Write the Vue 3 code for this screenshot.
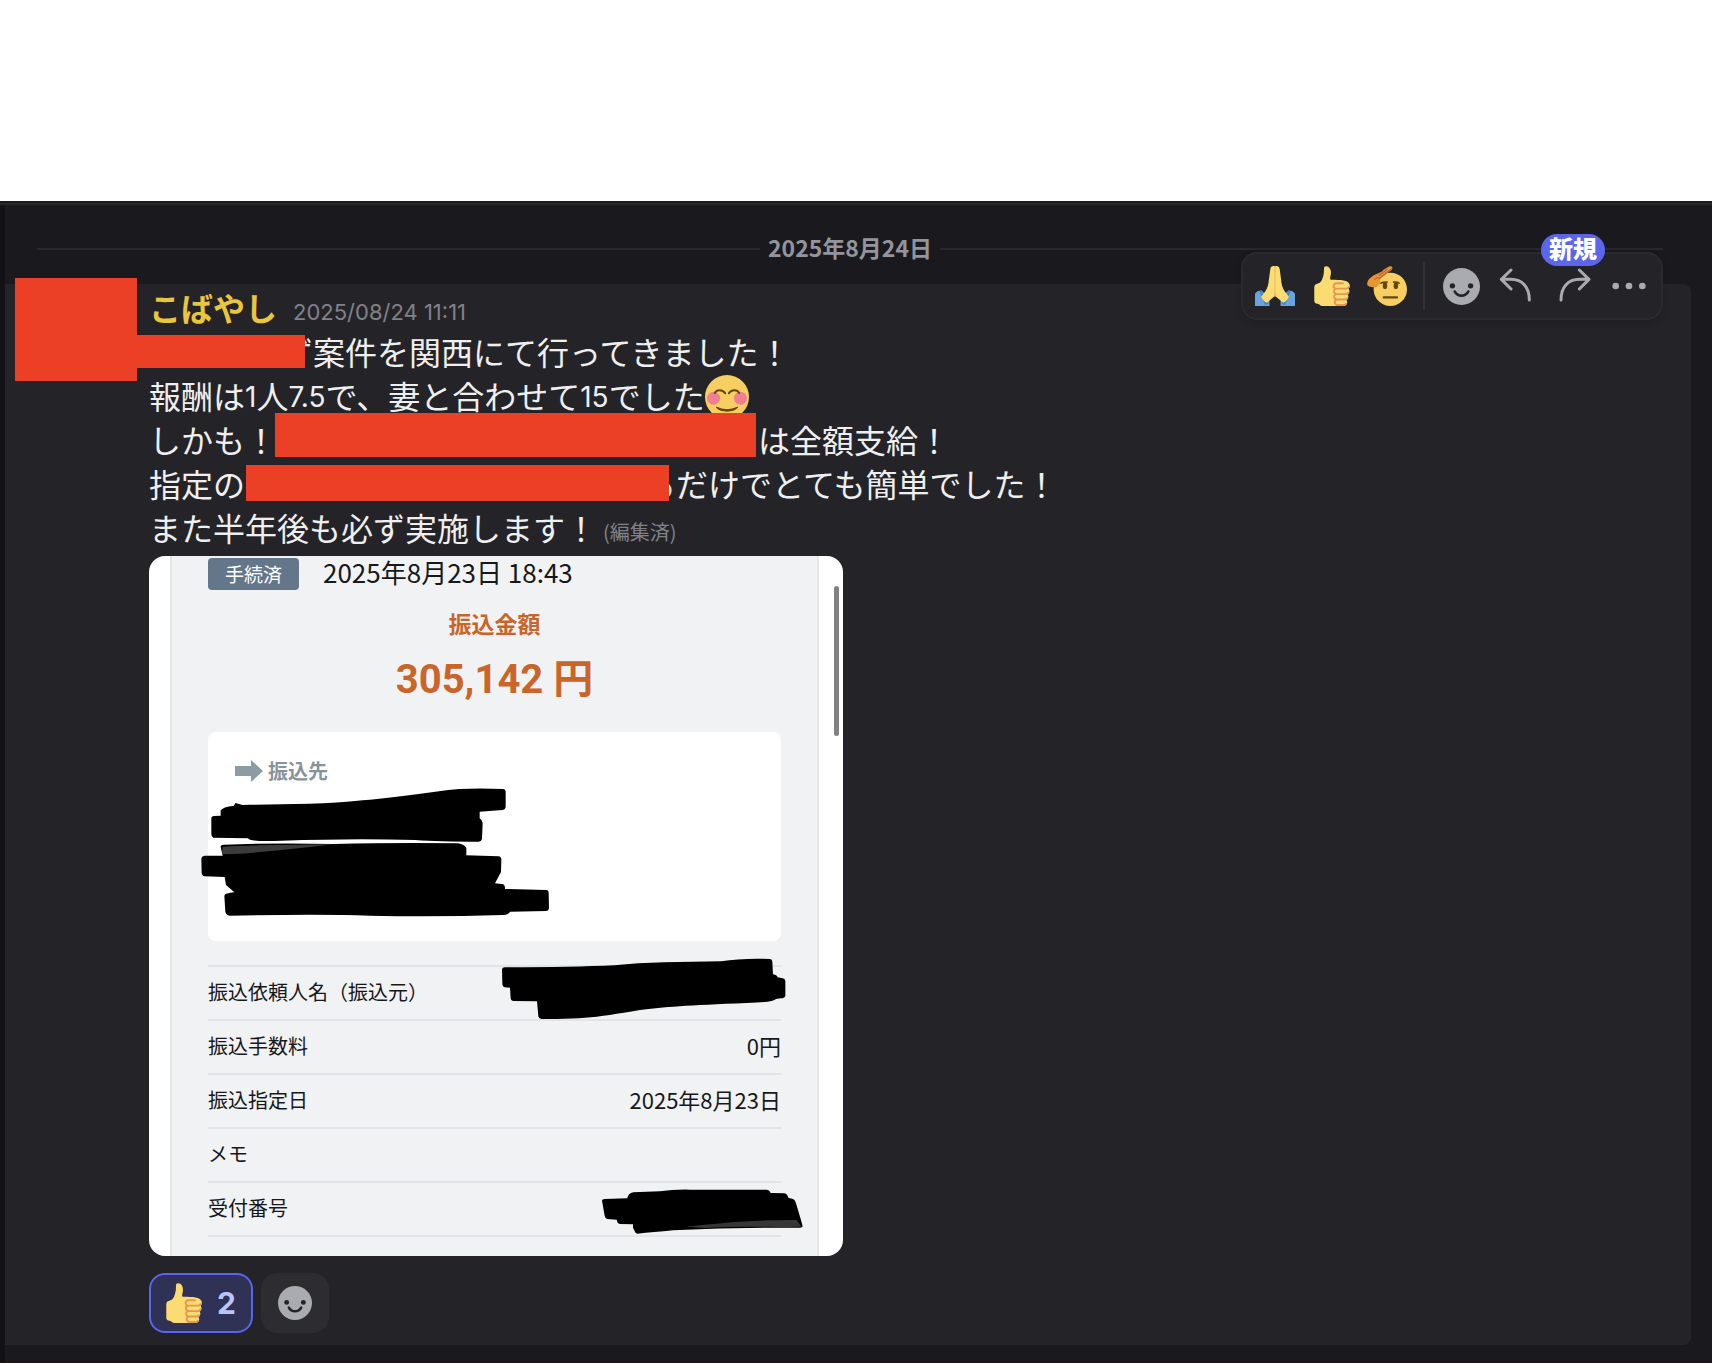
<template>
  <svg class="symbols" aria-hidden="true">
    <symbol id="thumb" viewBox="0 0 36 36">
      <path fill="#fadc72" d="M34.956 17.916c0-.503-.12-.975-.321-1.404-1.341-4.326-7.619-4.01-16.549-4.221-1.493-.035-.639-1.798-.115-5.668.341-2.517-1.282-6.382-4.01-6.382-4.498 0-.171 3.548-4.148 12.322-2.125 4.688-6.875 2.062-6.875 6.771v10.719c0 1.833.18 3.595 2.758 3.885C8.195 34.219 7.633 36 11.238 36h18.044c1.838 0 3.333-1.496 3.333-3.334 0-.762-.267-1.456-.698-2.018 1.02-.571 1.72-1.649 1.72-2.899 0-.76-.266-1.454-.696-2.015 1.023-.57 1.725-1.649 1.725-2.901 0-.909-.368-1.733-.961-2.336.757-.611 1.251-1.535 1.251-2.581z" />
      <path fill="#e59752" d="M23.02 21.249h8.604c1.17 0 2.268-.626 2.866-1.633.246-.415.109-.952-.307-1.199-.415-.247-.952-.108-1.199.307-.283.479-.806.775-1.361.775h-8.81c-.873 0-1.583-.71-1.583-1.583s.71-1.583 1.583-1.583H28.7c.483 0 .875-.392.875-.875s-.392-.875-.875-.875h-5.888c-1.838 0-3.333 1.495-3.333 3.333 0 1.025.475 1.932 1.205 2.544-.615.605-.998 1.445-.998 2.373 0 1.028.478 1.938 1.212 2.549-.611.604-.99 1.441-.99 2.367 0 1.12.559 2.108 1.409 2.713-.524.589-.852 1.356-.852 2.204 0 1.838 1.495 3.333 3.333 3.333h5.484c1.17 0 2.269-.625 2.867-1.632.247-.415.11-.952-.305-1.199-.416-.245-.953-.11-1.199.305-.285.479-.808.776-1.363.776h-5.484c-.873 0-1.583-.71-1.583-1.583s.71-1.583 1.583-1.583h6.506c1.17 0 2.27-.626 2.867-1.633.247-.416.11-.953-.305-1.199-.419-.251-.954-.11-1.199.305-.289.487-.799.777-1.363.777h-7.063c-.873 0-1.583-.711-1.583-1.584s.71-1.583 1.583-1.583h8.091c1.17 0 2.269-.625 2.867-1.632.247-.415.11-.952-.305-1.199-.417-.246-.953-.11-1.199.305-.289.486-.799.776-1.363.776H23.02c-.873 0-1.583-.71-1.583-1.583s.71-1.584 1.583-1.584z" />
    </symbol>
    <symbol id="smile" viewBox="0 0 110 110">
      <circle cx="55" cy="55" r="55" fill="#aaaab1" />
      <circle cx="28" cy="53" r="8" fill="#242428" />
      <circle cx="82" cy="53" r="8" fill="#242428" />
      <path d="M35 70c9 16 31 16 40 0" fill="none" stroke="#242428" stroke-width="8" stroke-linecap="round" />
    </symbol>
  </svg>

  <main class="chat">
    <div class="divider"><span>2025年8月24日</span></div>

    <article class="message">
      <div class="avatar-mask"></div>

      <header class="linha">
        <span class="name">こばやし</span>
        <time class="time">2025/08/24 11:11</time>
      </header>

      <p class="linha first">
        <span class="mask mask-a"></span><span class="behind-a">ず</span>案件を関西にて行ってきました！
      </p>
      <p class="linha">
        報酬は<span class="num">1</span>人<span class="num">7.5</span>で、妻と合わせて<span class="num">15</span>でした
        <svg class="emoji-text" viewBox="0 0 36 36" role="img" aria-label="blush">
          <circle cx="18" cy="18" r="18" fill="#f7ce62" />
          <circle cx="7" cy="19" r="5.3" fill="#f07f93" />
          <circle cx="29" cy="19" r="5.3" fill="#f07f93" />
          <path d="M8 14.8c1.500-3.200 6.500-3.200 8.500.2M19.500 15c2-3.400 7-3.400 8.500-.2" fill="none" stroke="#664510" stroke-width="1.6" stroke-linecap="round" />
          <path d="M9.500 26.500c5 2.600 12 2.600 17 0-4 4-13 4-17 0z" fill="#664510" stroke="#664510" stroke-linejoin="round" />
        </svg>
      </p>
      <p class="linha">しかも！<span class="mask mask-b"></span>は全額支給！</p>
      <p class="linha">指定の<span class="mask mask-c"></span><span class="behind-c">る</span>だけでとても簡単でした！</p>
      <p class="linha">また半年後も必ず実施します！<small class="edited">(編集済)</small></p>

      <figure class="receipt">
        <div class="paper">
          <div class="status">
            <span class="tag">手続済</span>
            <time>2025年8月23日 18:43</time>
          </div>
          <h2>振込金額</h2>
          <p class="amount">305,142 円</p>
          <section class="payee">
            <h3>
              <svg width="28" height="22" viewBox="0 0 28 22"><path d="M0 6h16V0l12 11-12 11v-6H0z" fill="#8b9da3" /></svg>
              振込先
            </h3>
          </section>
          <table>
            <tbody>
              <tr v-for="row in rows" :key="row.label">
                <th scope="row">{{ row.label }}</th>
                <td>{{ row.value }}</td>
              </tr>
            </tbody>
          </table>
        </div>
        <span class="scroll"></span>

        <!-- marker strokes over the private fields -->
        <svg class="strokes" viewBox="0 0 694 700" aria-hidden="true">
          <svg x="41" y="169" width="400" height="230" viewBox="0 0 1200 690">
            <path d="M64 278q2-5 8-5l20-1v-16q6-10 40-14l4-8 22 6c120-2 250-2 360-14 120-10 200-26 290-34q60-3 132 0 7 1 7 8v46q-2 9-10 9l-68 5v20q9 6 9 14l-2 48q-2 8-10 8-120 0-190-5-180-6-400 2-100 4-102-7l-104-2q-6-2-6-10z" />
            <path d="M92 366q0-7 10-7 150-6 330-2 200-5 372-2 20 4 25 14v22l96 3q9 1 9 9l-1 38-18 34 25 3q6 4 5 14l124 3q7 1 7 10l1 44q-1 9-9 9l-108 2q-4 9-20 10-200 6-400 2-150-6-420 0-12-2-14-12l-3-48q2-8 30-10l-25-22-4-24-60-2q-8-1-9-10l-1-44q2-8 10-8h54z" />
            <path d="M97 366q8-5 335-8-170 20-280 28l-55 2z" fill="#555" opacity=".7" />
          </svg>
          <svg x="331" y="344" width="363" height="356" viewBox="0 0 1089 1068">
            <path d="M66 208q1-6 8-6 200 0 330-6c90-10 200-10 320-12q60-10 146-7 7 1 7 8l2 38q12 2 14 9l15 3q7 1 8 8v44q-2 8-14 8l-14 2q-8 10-88 12c-180 7-250 12-320 21-110 18-150 28-296 27q-8-1-9-8l-4-45-72-1q-7-1-7-8l-2-32-16-1q-7-2-7-12z" />
            <path d="M366 902q0-5 8-5l68-2q2-15 18-18l80-3q40-6 90-5h230q8 0 12 10l42 1q7 1 11 13l14 4q6 2 8 10l14 46 7 26q0 4-8 4-190-1-380 8-60 6-108 10-7-2-8-8l-5-10v-10l-40-1q-8-3-9-13l-28-2q-6-1-8-10z" />
            <path d="M620 980c120-12 180-20 330-20l14 20c-90 2-180-2-290 4z" fill="#444" opacity=".8" />
          </svg>
        </svg>
      </figure>

      <div class="reactions">
        <button class="reaction active" type="button" @click="toggle">
          <svg class="emoji"><use href="#thumb" /></svg>
          <span>{{ count }}</span>
        </button>
        <button class="reaction add" type="button" aria-label="リアクションを付ける">
          <svg class="smile-small"><use href="#smile" /></svg>
        </button>
      </div>

      <div class="toolbar">
        <button type="button" aria-label="pray">
          <svg class="emoji" viewBox="0 0 36 36">
            <path fill="#67a4e0" d="M0 25c1-2 3-3 6-3l7 7v7H0zM36 25c-1-2-3-3-6-3l-7 7v7h13z" />
            <path fill="#4b83bd" d="M5 22l-1 1 5 12 3-1-6-12zM31 22l1 1-5 12-3-1 6-12z" />
            <path fill="#fadc72" d="M17.800.2c-2-.6-3.600.1-4 2.500l-1.300 9.500c-.2 4-1.200 8-3.500 11l-3.500 4.500c1 2.400 2.800 4.400 5 5.300l7.500-6 7.500 6c2.200-.9 4-2.900 5-5.300L27 23.200c-2.300-3-3.300-7-3.500-11L22.200 2.700C21.800.3 20-.4 18.200.2z" />
            <path fill="none" stroke="#eeb95b" d="M18 .5V27" />
            <path fill="#eeb95b" d="M18 23l-1.500 5 1.500-1 1.500 1z" />
          </svg>
        </button>
        <button type="button" aria-label="thumbsup"><svg class="emoji"><use href="#thumb" /></svg></button>
        <button type="button" aria-label="saluting face">
          <svg class="emoji" viewBox="0 0 36 36">
            <circle cx="21" cy="21" r="15" fill="#f7ce62" />
            <path fill="#e59436" d="M22.500.8c-1.500-1.600-6 1.200-9.300 4.400C9 7 3 9.500 1 13c-1.500 3-1 5 1 5.500 2.500.8 6 1 8-.5 2-1.800 2-4.500 1.500-6.500L22 3.500c1-.9 1.200-1.800.5-2.700z" />
            <path d="M22 2.500L11 11.500M18 3l-7 5.500M11.500 11.500c-1-1.500-3-1-4.500.5" fill="none" stroke="#b9652a" stroke-linecap="round" />
            <path d="M12.500 15.500c1.500-1 3.500-1.200 5.500-1M24 14.500c2-.2 4 0 5 1" fill="none" stroke="#664510" stroke-width="1.500" stroke-linecap="round" />
            <ellipse cx="16.200" cy="17.700" rx="2" ry="3" fill="#664510" />
            <ellipse cx="26" cy="17.700" rx="2" ry="3" fill="#664510" />
            <path d="M15 28.300h12" stroke="#664510" stroke-width="2" stroke-linecap="round" />
          </svg>
        </button>
        <span class="sep"></span>
        <button type="button" aria-label="リアクション"><svg class="smile"><use href="#smile" /></svg></button>
        <button type="button" aria-label="返信">
          <svg class="emoji line" viewBox="0 0 120 120"><path d="M42 12L13 40l29 29M13 40h28c36 0 56 24 56 62" /></svg>
        </button>
        <button type="button" aria-label="転送">
          <svg class="emoji line" viewBox="0 0 120 120"><path d="M79 12l29 28-29 29M108 40H80c-36 0-56 24-56 62" /></svg>
          <span class="new">新規</span>
        </button>
        <button type="button" aria-label="その他">
          <svg class="emoji" viewBox="0 0 120 120" fill="#aaaab1">
            <circle cx="20" cy="60" r="10" /><circle cx="60" cy="60" r="10" /><circle cx="100" cy="60" r="10" />
          </svg>
        </button>
      </div>
    </article>
  </main>
</template>

<script setup>
import { ref } from 'vue';

const count = ref(2);
const rows = [
  { label: '振込依頼人名（振込元）', value: '' },
  { label: '振込手数料', value: '0円' },
  { label: '振込指定日', value: '2025年8月23日' },
  { label: 'メモ', value: '' },
  { label: '受付番号', value: '' },
];

function toggle() {
  count.value = count.value === 2 ? 1 : 2;
}
</script>

<style>
body {
  margin: 0;
  background: #fff;
}
</style>

<style scoped>
* {
  box-sizing: border-box;
}
.symbols {
  position: absolute;
  width: 0;
  height: 0;
}
.chat {
  margin: 201px 2px 0 0;
  padding-bottom: 16px;
  background: #1a1a1e;
  border-left: 5px solid #121214;
  border-bottom: 2px solid #1c1418;
  font-family: 'Noto Sans CJK JP', sans-serif;
  color: #efeff0;
}
.chat::before {
  content: '';
  display: block;
  margin-left: -5px;
  border-top: 2px solid #1a1a1e;
  border-bottom: 2px solid #28282d;
}
.divider {
  display: flex;
  align-items: center;
  gap: 8px;
  height: 79px;
  margin: 0 49px 0 32px;
  padding-top: 9px;
  font-size: 23px;
  font-weight: 700;
  line-height: 32px;
  color: #94949c;
}
.divider span {
  padding-bottom: 4px;
}
.divider::before,
.divider::after {
  content: '';
  flex: 1;
  height: 2px;
  background: #28282d;
}
.message {
  position: relative;
  margin-right: 21px;
  padding: 1px 0 12px 144px;
  background: #242428;
  border-radius: 0 8px 8px 0;
}
.avatar-mask {
  position: absolute;
  left: 10px;
  top: -6px;
  width: 122px;
  height: 103px;
  background: #eb4026;
}
.linha {
  display: flex;
  align-items: center;
  height: 44px;
  margin: 0;
  font-size: 32px;
  line-height: 44px;
  white-space: nowrap;
}
.name {
  font-weight: 700;
  color: #e9c63f;
}
.time {
  margin-left: 16px;
  padding-top: 10px;
  font-family: Inter, 'Noto Sans CJK JP', sans-serif;
  font-size: 22px;
  color: #81818a;
}
.mask {
  position: relative;
  background: #eb4026;
}
.first {
  margin-left: -12px;
}
.mask-a {
  width: 168px;
  height: 33px;
}
.behind-a {
  margin-left: -24px;
}
.mask-b {
  width: 481px;
  height: 44px;
  margin: -8px 2px 0 -2px;
}
.mask-c {
  width: 423px;
  height: 36px;
  margin-left: 1px;
}
.behind-c {
  margin-left: -25px;
}
.num {
  padding-top: 4px;
  font-family: Inter, 'Noto Sans CJK JP', sans-serif;
  font-size: 28px;
}
.emoji-text {
  width: 44px;
  height: 44px;
  margin-top: 4px;
}
.edited {
  margin-left: 6px;
  padding-top: 10px;
  font-size: 20px;
  color: #81818a;
}
.receipt {
  position: relative;
  max-width: 694px;
  margin: 7px 0 17px;
  padding: 0 24px 0 21px;
  background: #fff;
  border-radius: 16px;
  color: #17181a;
}
.paper {
  padding: 2px 36px 19px;
  background: #f1f2f4;
  border: solid #e4e5e7;
  border-width: 0 2px;
}
.status {
  display: flex;
  align-items: center;
  gap: 24px;
  height: 32px;
  font-size: 26px;
  line-height: 28px;
}
.status time {
  padding-bottom: 4px;
}
.tag {
  width: 91px;
  border-radius: 4px;
  background: #64768a;
  color: #fff;
  font-size: 19px;
  line-height: 32px;
  text-align: center;
}
h2 {
  margin: 17px 0;
  font-size: 23px;
  line-height: 32px;
  text-align: center;
  color: #c9652a;
}
.amount {
  margin: 0 0 28px;
  font: 700 40px/48px Roboto, 'Noto Sans CJK JP', sans-serif;
  text-align: center;
  color: #c9652a;
}
.payee {
  height: 209px;
  margin-bottom: 24px;
  padding: 25px 27px;
  background: #fff;
  border-radius: 8px;
}
h3 {
  display: flex;
  align-items: center;
  gap: 5px;
  margin: 0;
  font-size: 20px;
  font-weight: 700;
  line-height: 28px;
  color: #87939a;
}
table {
  width: 100%;
  border-collapse: collapse;
}
tr {
  height: 54px;
  border: solid #e3e4e7;
  border-width: 2px 0;
}
th,
td {
  padding: 0 0 2px;
  line-height: 32px;
}
th {
  font-size: 20px;
  font-weight: 400;
  text-align: left;
}
td {
  padding-bottom: 4px;
  font-size: 22px;
  text-align: right;
}
.scroll {
  position: absolute;
  top: 30px;
  right: 4px;
  width: 5px;
  height: 150px;
  border-radius: 3px;
  background: #828282;
}
.strokes {
  position: absolute;
  top: 0;
  left: 0;
  width: 694px;
  height: 700px;
}
.reactions {
  display: flex;
  gap: 8px;
}
button {
  font: inherit;
  color: inherit;
  background: none;
  border: 0;
  padding: 0;
  cursor: pointer;
}
.reaction {
  display: flex;
  align-items: center;
  justify-content: center;
  height: 60px;
  border-radius: 16px;
}
.active {
  gap: 14px;
  width: 104px;
  padding-right: 3px;
  border: 2px solid #5865f2;
  background: #2f3155;
  font-family: Inter, sans-serif;
  font-size: 30px;
  font-weight: 700;
  line-height: 40px;
  color: #bac5fb;
}
.add {
  width: 68px;
  background: #2c2c31;
}
.emoji {
  width: 40px;
  height: 40px;
}
.smile {
  width: 37px;
  height: 37px;
}
.smile-small {
  width: 34px;
  height: 34px;
}
.line {
  fill: none;
  stroke: #aaaab1;
  stroke-width: 9;
  stroke-linecap: round;
  stroke-linejoin: round;
}
.toolbar {
  position: absolute;
  top: -32px;
  right: 28px;
  display: flex;
  align-items: center;
  gap: 8px;
  padding: 8px;
  border: 2px solid #2a2a2f;
  border-radius: 16px;
  background: #242428;
  box-shadow: 0 2px 6px rgba(0, 0, 0, 0.15);
}
.toolbar button {
  position: relative;
  display: flex;
  align-items: center;
  justify-content: center;
  width: 48px;
  height: 48px;
}
.sep {
  width: 2px;
  height: 48px;
  margin: 0 4px;
  background: #313136;
}
.new {
  position: absolute;
  top: -28px;
  left: -8px;
  width: 64px;
  padding-bottom: 4px;
  border-radius: 16px;
  background: #5b66ea;
  color: #fff;
  font-size: 24px;
  font-weight: 900;
  line-height: 28px;
}
</style>
